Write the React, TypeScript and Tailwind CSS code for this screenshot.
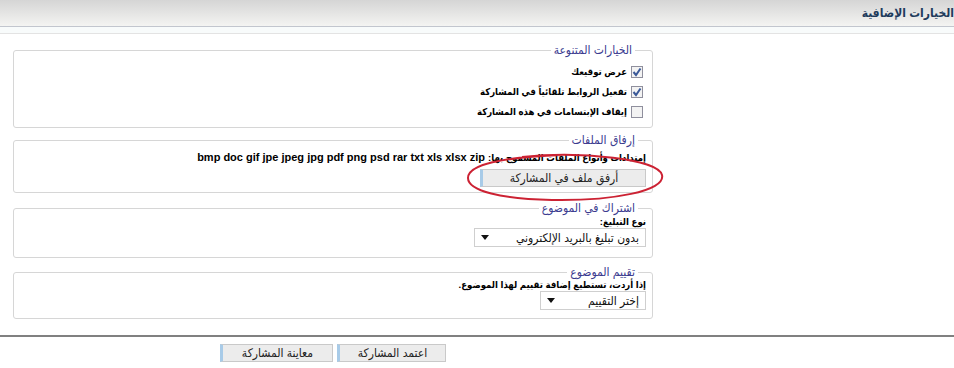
import React from "react";

const font = "font-['Liberation_Sans','DejaVu_Sans_Condensed','DejaVu_Sans',sans-serif]";

function Legend({ children }: { children: React.ReactNode }) {
  return (
    <legend className="mr-[8px] px-[3px] text-[12px] leading-[16px] text-[#3b3b8f]">{children}</legend>
  );
}

function Check({ checked, label }: { checked?: boolean; label: string }) {
  return (
    <label className="flex h-[20px] items-center gap-[4px]">
      <span className="flex h-[12px] w-[12px] items-center justify-center border border-[#8f8f9d] bg-[#f3f3f3]">
        {checked && (
          <svg width="10" height="10" viewBox="0 0 10 10">
            <path d="M1.5 5 L4 8 L8.5 1.5" fill="none" stroke="#3b5998" strokeWidth="2" />
          </svg>
        )}
      </span>
      <span className="text-[9.5px] font-bold text-black">{label}</span>
    </label>
  );
}

function Arrow() {
  return (
    <svg width="8" height="5" viewBox="0 0 8 5" className="shrink-0">
      <path d="M0 0 H8 L4 5 Z" fill="#111" />
    </svg>
  );
}

function Button({ children, className = "" }: { children: React.ReactNode; className?: string }) {
  return (
    <button
      className={`h-[18px] border border-[#c9c9c9] border-l-[3px] border-l-[#a8cbe8] bg-[#ececec] text-[12px] leading-[16px] text-[#222] ${className}`}
    >
      {children}
    </button>
  );
}

export default function App() {
  return (
    <div className={`relative h-[368px] w-[954px] overflow-hidden bg-white ${font}`}>
      <div className="h-[27px] border-b border-[#c2c6ce] bg-gradient-to-b from-[#d5d5d5] to-[#f4f4f2]" dir="rtl">
        <h2 className="pt-[5px] text-[12px] font-bold leading-[16px] text-[#1e3b5c]">الخيارات الإضافية</h2>
      </div>
      <div className="h-[7px] border-b border-[#e3e3e3] bg-[#f8fbfb]" />

      <div className="ml-[13px] w-[640px] pt-[8px]" dir="rtl">
        <fieldset className="rounded-[3px] border border-[#d6d6d6] px-[9px] pb-[5px] pt-[4px]">
          <Legend>الخيارات المتنوعة</Legend>
          <Check checked label="عرض توقيعك" />
          <Check checked label="تفعيل الروابط تلقائياً في المشاركة" />
          <Check label="إيقاف الإبتسامات في هذه المشاركة" />
        </fieldset>

        <fieldset className="relative mt-[4px] rounded-[3px] border border-[#d6d6d6] px-[6px] pb-[3px] pt-[2px]">
          <Legend>إرفاق الملفات</Legend>
          <div className="text-[11px] font-bold leading-[14px] text-black">
            <span className="text-[9.5px]">إمتدادات وأنواع الملفات المسموح بها:</span> bmp doc gif jpe jpeg jpg pdf png psd rar txt xls xlsx zip
          </div>
          <Button className="mt-[1px] w-[166px]">أرفق ملف في المشاركة</Button>
        </fieldset>

        <fieldset className="mt-[7px] rounded-[3px] border border-[#d6d6d6] px-[6px] pb-[10px]">
          <Legend>اشتراك في الموضوع</Legend>
          <div className="-mt-[1px] text-[9.5px] font-bold leading-[13px] text-black">نوع التبليغ:</div>
          <div className="flex h-[19px] w-[172px] items-center justify-between border border-[#cfcfcf] bg-white px-[6px] text-[12px] text-[#111]">
            <span>بدون تبليغ بالبريد الإلكتروني</span>
            <Arrow />
          </div>
        </fieldset>

        <fieldset className="mt-[6px] rounded-[3px] border border-[#d6d6d6] px-[6px] pb-[8px]">
          <Legend>تقييم الموضوع</Legend>
          <div className="-mt-[2px] text-[9.5px] font-bold leading-[13px] text-black">إذا أردت، تستطيع إضافة تقييم لهذا الموضوع.</div>
          <div className="flex h-[19px] w-[106px] items-center justify-between border border-[#cfcfcf] bg-white px-[6px] text-[12px] text-[#111]">
            <span>إختر التقييم</span>
            <Arrow />
          </div>
        </fieldset>
      </div>

      <div className="mt-[16px] border-t-2 border-[#808080]" />
      <div className="flex w-[666px] justify-center gap-[4px] pt-[7px]" dir="rtl">
        <Button className="w-[109px]">اعتمد المشاركة</Button>
        <Button className="w-[113px]">معاينة المشاركة</Button>
      </div>

      <svg className="pointer-events-none absolute left-[462px] top-[151px]" width="210" height="54" viewBox="0 0 210 54">
        <path
          d="M60 6 C120 0 196 8 200 24 C204 40 150 50 90 49 C40 48 6 40 6 27 C6 14 40 6 100 4"
          fill="none"
          stroke="#cc2233"
          strokeWidth="2"
        />
      </svg>
    </div>
  );
}
